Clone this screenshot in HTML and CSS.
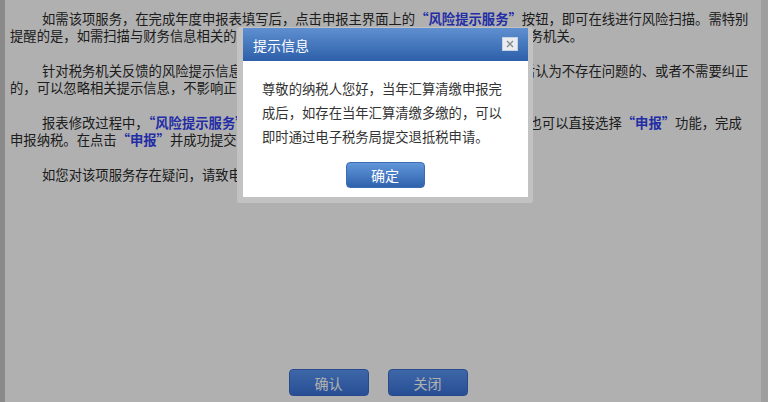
FILE: index.html
```html
<!DOCTYPE html>
<html lang="zh-CN">
<head>
    <meta charset="UTF-8">
    <title>风险提示服务</title>
    <link rel="stylesheet" href="styles.css">
</head>
<body>
    <div class="page">
        <div class="side side-left"></div>
        <div class="content">
            <div class="notice">
                <p>如需该项服务，在完成年度申报表填写后，点击申报主界面上的<b>“风险提示服务”</b>按钮，即可在线进行风险扫描。需特别<br>提醒的是，如需扫描与财务信息相关的风险，需在年度申报前先将财务会计报表报送至税务机关。</p>
                <p>针对税务机关反馈的风险提示信息，纳税人可结合自身实际情况进行核实，如核实后认为不存在问题的、或者不需要纠正<br>的，可以忽略相关提示信息，不影响正常申报。</p>
                <p>报表修改过程中，<b>“风险提示服务”</b>可以重复使用，修改报表后可以再次进行扫描，也可以直接选择<b>“申报”</b>功能，完成<br>申报纳税。在点击<b>“申报”</b>并成功提交申报表后，即完成年度申报。</p>
                <p>如您对该项服务存在疑问，请致电12366纳税服务热线咨询。</p>
            </div>
            <div class="actions">
                <button class="btn">确认</button>
                <button class="btn">关闭</button>
            </div>
        </div>
        <div class="side side-right"></div>
    </div>

    <div class="mask"></div>

    <div class="dialog">
        <div class="dialog-head">
            <span class="dialog-title">提示信息</span>
            <span class="dialog-close">
                <svg width="8" height="8" viewBox="0 0 8 8"><path d="M1 1L7 7M7 1L1 7" stroke="#8a8a8a" stroke-width="1.4"/></svg>
            </span>
        </div>
        <div class="dialog-body">
            <p class="dialog-text">尊敬的纳税人您好，当年汇算清缴申报完成后，如存在当年汇算清缴多缴的，可以即时通过电子税务局提交退抵税申请。</p>
            <div class="dialog-foot">
                <button class="btn btn-ok">确定</button>
            </div>
        </div>
    </div>
</body>
</html>
```

FILE: styles.css
```css
html, body {
    margin: 0;
    height: 100%;
    overflow: hidden;
}
body {
    font-family: "Noto Sans CJK SC", "Liberation Sans", sans-serif;
    background: #fff;
    color: #2a2a2a;
}
.page {
    display: flex;
    height: 100vh;
}
.side {
    flex: none;
}
.side-left {
    width: 5px;
    background: #c8c8c8;
}
.side-right {
    width: 7px;
    background: #e6e6e6;
}
.content {
    flex: 1;
    display: flex;
    flex-direction: column;
}
.notice {
    flex: 1;
    padding: 10px 0 0 5px;
    font-size: 13.33px;
    line-height: 17px;
    white-space: nowrap;
}
.notice p {
    margin: 0 0 18px;
    text-indent: 32px;
}
.notice b {
    color: #3242f0;
}
.actions {
    display: flex;
    justify-content: center;
    gap: 19px;
    padding: 0 10px 6px 0;
}
.btn {
    width: 80px;
    height: 27px;
    border: 1px solid #3a6ccc;
    border-radius: 4px;
    background: linear-gradient(#5a96f4, #3a72d8);
    color: #fff;
    font-family: "Noto Sans CJK SC", sans-serif;
    font-size: 14px;
    padding: 0;
    cursor: pointer;
}
.mask {
    position: fixed;
    inset: 0;
    background: rgba(0, 0, 0, 0.31);
}
.dialog {
    position: absolute;
    left: 237px;
    top: 27px;
    width: 285px;
    border: 6px solid #c2c2c2;
    border-top-width: 1px;
    border-right-width: 5px;
    border-radius: 3px;
    box-shadow: inset 0 0 0 1px #d4d4d4;
}
.dialog-head {
    height: 33px;
    display: flex;
    align-items: center;
    justify-content: space-between;
    padding: 0 10px;
    background: linear-gradient(#5f8fd0, #2d60aa);
}
.dialog-title {
    color: #fff;
    font-size: 14px;
}
.dialog-close {
    width: 14px;
    height: 12px;
    display: flex;
    align-items: center;
    justify-content: center;
    background: #e9ecf0;
    border: 1px solid #c8d2e0;
    margin-top: -2px;
}
.dialog-body {
    background: #fff;
    padding: 16px 20px 9px 19px;
}
.dialog-text {
    margin: 0;
    font-size: 13.33px;
    line-height: 24px;
    color: #333;
}
.dialog-foot {
    display: flex;
    justify-content: center;
    margin-top: 13px;
}
.btn-ok {
    width: 79px;
    height: 26px;
    border-color: #3d6cb4;
    background: linear-gradient(#6196da, #2f62ad);
}
```
